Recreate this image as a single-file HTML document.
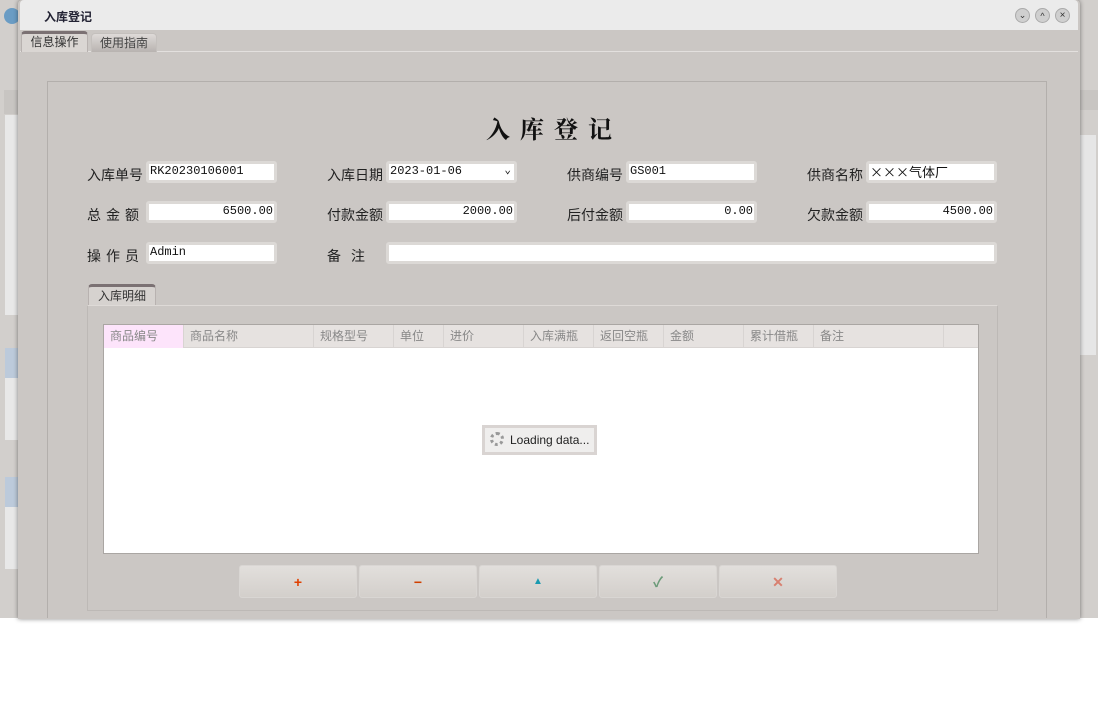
<!DOCTYPE html>
<html><head><meta charset="utf-8"><style>
*{margin:0;padding:0;box-sizing:border-box}
body{width:1098px;height:725px;background:#fff;position:relative;overflow:hidden;font-family:"Liberation Sans","Noto Sans CJK SC",sans-serif;font-size:12px;color:#222}
.a{position:absolute}
.lbl{position:absolute;font-size:14px;color:#222;font-family:"Liberation Sans","Noto Sans CJK SC",sans-serif}
.inp{position:absolute;height:22px;background:#fff;border:3px solid #dcd9d6;border-radius:3px;font-family:"Liberation Mono","Noto Sans CJK SC",monospace;font-size:12px;line-height:15px;padding:0 1px;color:#111}
.r{text-align:right}
.th{position:absolute;top:0;height:23px;line-height:23px;color:#888;padding-left:6px;border-right:1px solid #d8d4d2;font-size:12px}
.btn{position:absolute;top:565px;width:118px;height:33px;border:1px solid #d9d6d3;border-radius:3px;background:linear-gradient(#e2dfdc,#d3cfcb);text-align:center;line-height:32px;font-weight:bold;font-size:14px}
</style></head><body>
<!-- background app -->
<div class="a" style="left:0;top:0;width:1098px;height:618px;background:#d2cfcc"></div>
<div class="a" style="left:4px;top:8px;width:16px;height:16px;border-radius:8px;background:#6a9cc4"></div>
<div class="a" style="left:4px;top:90px;width:16px;height:24px;background:#c8c5c2"></div>
<div class="a" style="left:5px;top:115px;width:15px;height:200px;background:#e8e8e8"></div>
<div class="a" style="left:5px;top:348px;width:15px;height:30px;background:#bccadb"></div>
<div class="a" style="left:5px;top:378px;width:15px;height:62px;background:#e8e8e8"></div>
<div class="a" style="left:5px;top:477px;width:15px;height:30px;background:#bccadb"></div>
<div class="a" style="left:5px;top:507px;width:15px;height:62px;background:#e8e8e8"></div>
<div class="a" style="left:1078px;top:90px;width:20px;height:20px;background:#c8c5c2"></div>
<div class="a" style="left:1078px;top:135px;width:18px;height:220px;background:#e6e6e6"></div>
<!-- window -->
<div class="a" style="left:18px;top:0;width:1062px;height:619px;background:#cbc7c4;box-shadow:0 0 5px rgba(0,0,0,.45);border-radius:4px 4px 0 0"></div>
<div class="a" style="left:20px;top:0;width:1058px;height:30px;background:#ebebeb;border-radius:4px 4px 0 0"></div>
<div class="a" style="left:44px;top:8px;font-size:12px;font-weight:bold;color:#223">入库登记</div>
<div class="a" style="left:1015px;top:8px;width:15px;height:15px;border-radius:8px;background:#cfcfcf;border:1px solid #aaa;font-size:9px;line-height:12px;text-align:center;color:#333">⌄</div>
<div class="a" style="left:1035px;top:8px;width:15px;height:15px;border-radius:8px;background:#cfcfcf;border:1px solid #aaa;font-size:9px;line-height:14px;text-align:center;color:#333">^</div>
<div class="a" style="left:1055px;top:8px;width:15px;height:15px;border-radius:8px;background:#cfcfcf;border:1px solid #aaa;font-size:10px;line-height:13px;text-align:center;color:#333">×</div>
<!-- tabs -->
<div class="a" style="left:20px;top:51px;width:1058px;height:1px;background:#e3e0de"></div>
<div class="a" style="left:21px;top:31px;width:67px;height:21px;background:#dad6d3;border:1px solid #b8b2b0;border-top:3px solid #7b7173;border-bottom:none;border-radius:4px 4px 0 0;text-align:center;line-height:17px;color:#333">信息操作</div>
<div class="a" style="left:91px;top:33px;width:66px;height:19px;background:linear-gradient(#dedad8,#b8b3b0);border:1px solid #c4c0bd;border-bottom:none;border-radius:4px 4px 0 0;text-align:center;line-height:18px;color:#444">使用指南</div>
<!-- fieldset -->
<div class="a" style="left:47px;top:81px;width:1000px;height:537px;border:1px solid #b3afac;border-bottom:none"></div>
<div class="a" style="left:0;top:110px;width:1098px;text-align:center;font-family:'Liberation Serif','Noto Serif CJK SC',serif;font-size:24px;font-weight:bold;letter-spacing:10px;color:#111;padding-left:10px">入库登记</div>
<!-- row1 -->
<div class="lbl" style="left:87px;top:165px">入库单号</div>
<div class="inp" style="left:146px;top:161px;width:131px">RK20230106001</div>
<div class="lbl" style="left:327px;top:165px">入库日期</div>
<div class="inp" style="left:386px;top:161px;width:131px">2023-01-06<span style="position:absolute;right:3px;top:0;font-size:11px">⌄</span></div>
<div class="lbl" style="left:567px;top:165px">供商编号</div>
<div class="inp" style="left:626px;top:161px;width:131px">GS001</div>
<div class="lbl" style="left:807px;top:165px">供商名称</div>
<div class="inp" style="left:866px;top:161px;width:131px;font-family:'Noto Sans CJK SC',sans-serif;font-size:13px">×××气体厂</div>
<!-- row2 -->
<div class="lbl" style="left:87px;top:205px;letter-spacing:5px">总金额</div>
<div class="inp r" style="left:146px;top:201px;width:131px">6500.00</div>
<div class="lbl" style="left:327px;top:205px">付款金额</div>
<div class="inp r" style="left:386px;top:201px;width:131px">2000.00</div>
<div class="lbl" style="left:567px;top:205px">后付金额</div>
<div class="inp r" style="left:626px;top:201px;width:131px">0.00</div>
<div class="lbl" style="left:807px;top:205px">欠款金额</div>
<div class="inp r" style="left:866px;top:201px;width:131px">4500.00</div>
<!-- row3 -->
<div class="lbl" style="left:87px;top:246px;letter-spacing:5px">操作员</div>
<div class="inp" style="left:146px;top:242px;width:131px">Admin</div>
<div class="lbl" style="left:327px;top:246px;letter-spacing:10px">备注</div>
<div class="inp" style="left:386px;top:242px;width:611px"></div>
<!-- detail tab -->
<div class="a" style="left:88px;top:284px;width:68px;height:22px;background:#d6d2cf;border:1px solid #b8b2b0;border-top:3px solid #7b7173;border-bottom:none;border-radius:4px 4px 0 0;text-align:center;line-height:18px;color:#333">入库明细</div>
<div class="a" style="left:87px;top:305px;width:911px;height:306px;border:1px solid #bdb9b6;border-top:1px solid #dedad7"></div>
<!-- grid -->
<div class="a" style="left:103px;top:324px;width:876px;height:230px;background:#fff;border:1px solid #aaa6a3">
 <div class="a" style="left:0;top:0;width:874px;height:23px;background:#e6e2e0;border-bottom:1px solid #d8d4d2"></div>
 <div class="th" style="left:0;width:80px;background:#fde4fb">商品编号</div>
 <div class="th" style="left:80px;width:130px">商品名称</div>
 <div class="th" style="left:210px;width:80px">规格型号</div>
 <div class="th" style="left:290px;width:50px">单位</div>
 <div class="th" style="left:340px;width:80px">进价</div>
 <div class="th" style="left:420px;width:70px">入库满瓶</div>
 <div class="th" style="left:490px;width:70px">返回空瓶</div>
 <div class="th" style="left:560px;width:80px">金额</div>
 <div class="th" style="left:640px;width:70px">累计借瓶</div>
 <div class="th" style="left:710px;width:130px">备注</div>
</div>
<div class="a" style="left:482px;top:425px;width:115px;height:30px;background:#efeeed;border:3px solid #d9d4d2;font-size:12px;line-height:24px;padding-left:25px;color:#222">Loading data...</div>
<div class="a" style="left:490px;top:432px;width:14px;height:14px;border-radius:7px;border:3px dotted #999"></div>
<!-- buttons -->
<div class="btn" style="left:239px;color:#e04000">+</div>
<div class="btn" style="left:359px;color:#d04000">−</div>
<div class="btn" style="left:479px;color:#1a9ab0;font-size:10px">▲</div>
<div class="btn" style="left:599px;color:#6a9a78">✓</div>
<div class="btn" style="left:719px;color:#d88070">✕</div>
</body></html>
